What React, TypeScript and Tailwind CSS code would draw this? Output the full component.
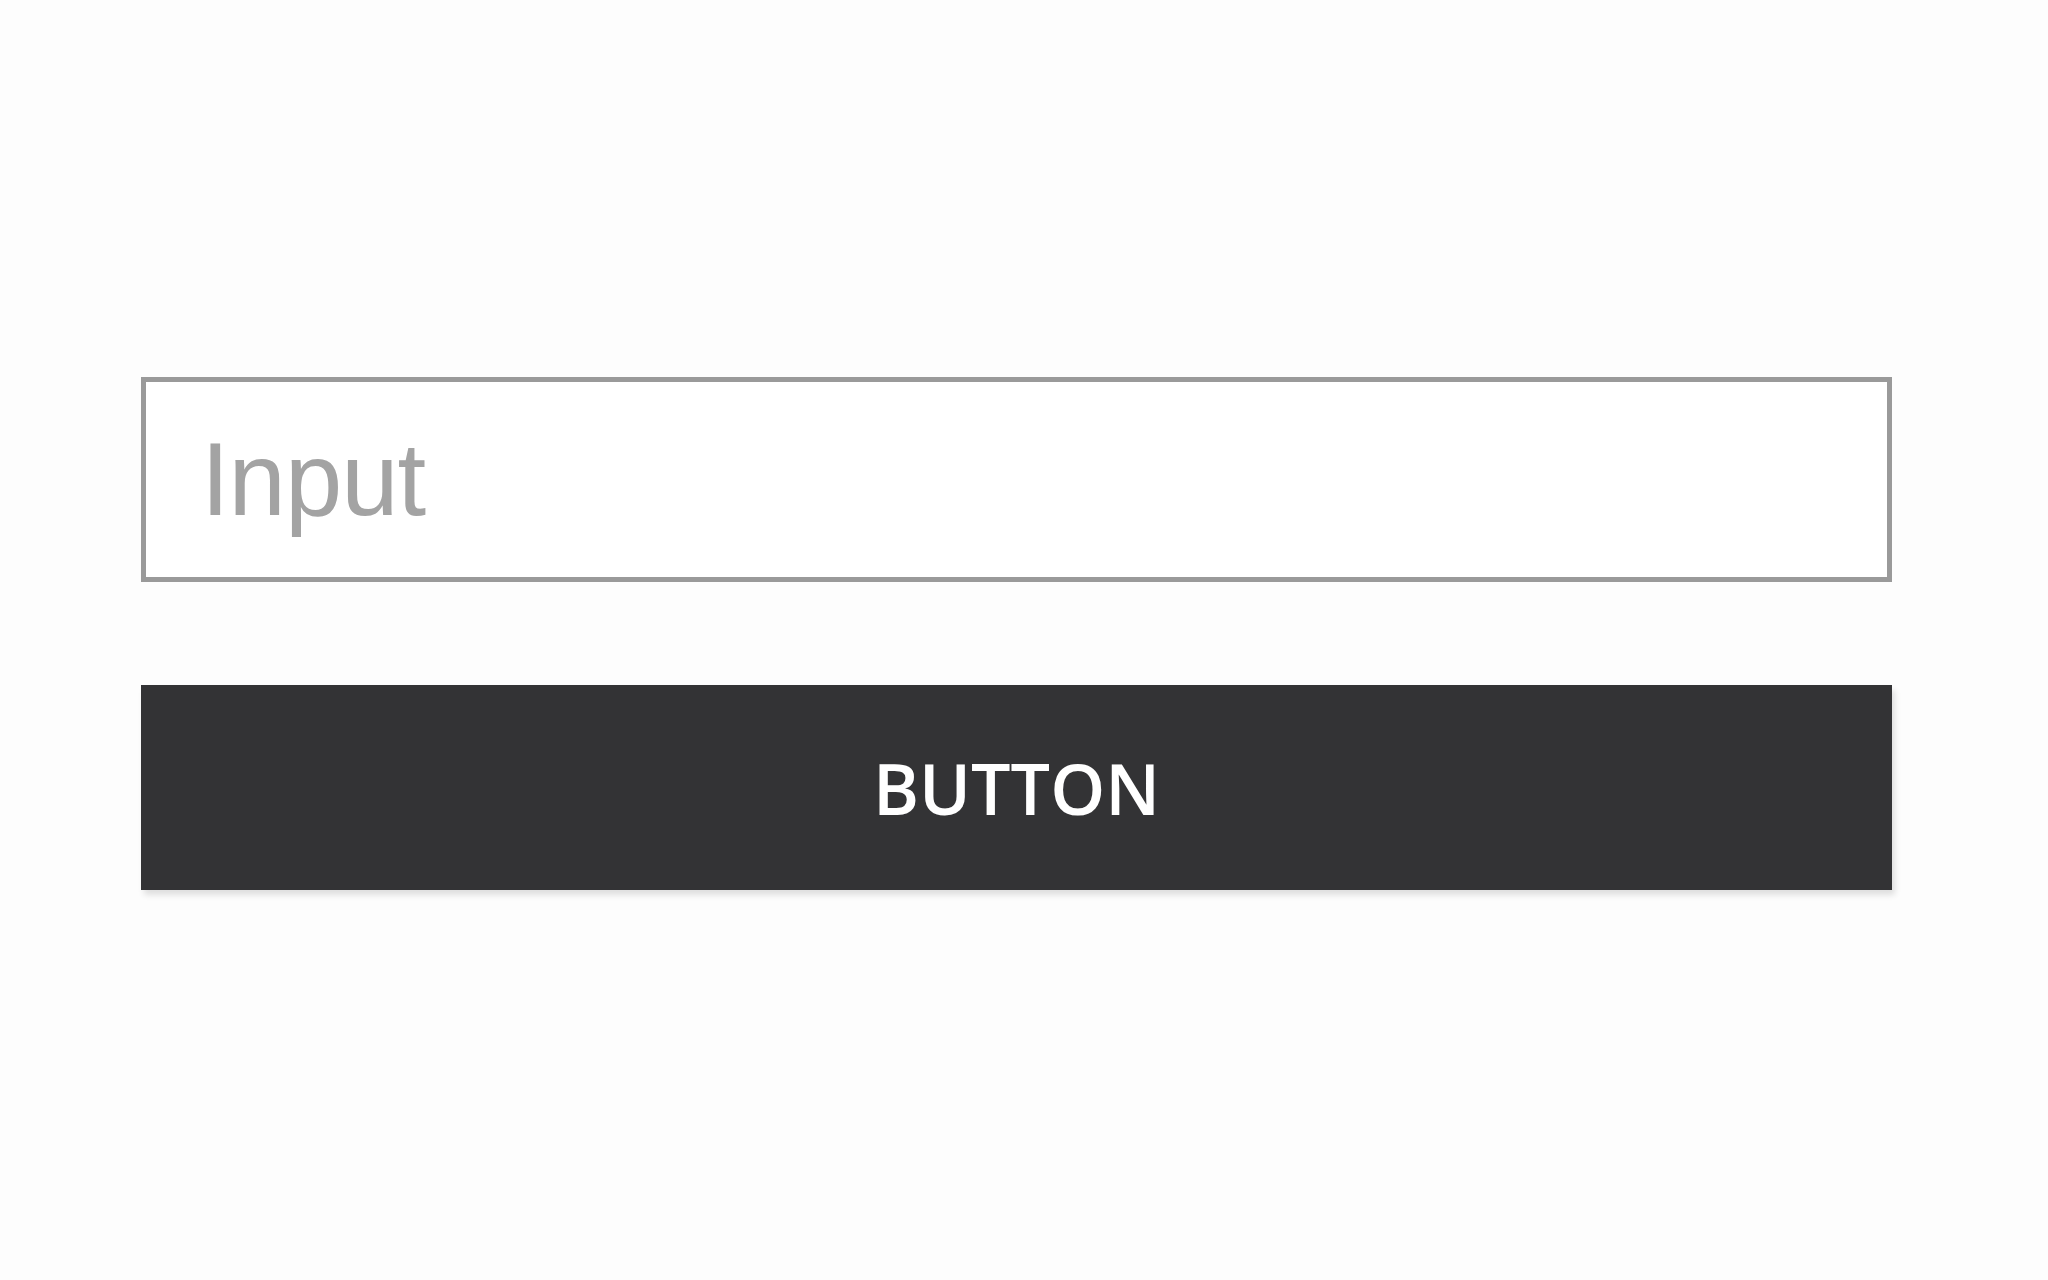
export default function App() {
  return (
    <div className="min-h-screen w-full bg-[#fdfdfd]">
      <div className="flex w-[1751px] flex-col gap-[103px] pt-[377px] ml-[141px]">
        <div className="flex h-[205px] items-center border-[5px] border-[#9a9a9a] bg-white pl-[55px]">
          <input
            placeholder="Input"
            className="w-full bg-transparent font-['Liberation_Sans',Arial,sans-serif] text-[103px] leading-none tracking-[-1px] text-[#a3a3a3] outline-none placeholder:text-[#a3a3a3]"
          />
        </div>
        <button className="flex h-[205px] items-center justify-center bg-[#333335] font-['Open_Sans','DejaVu_Sans',sans-serif] text-[70px] font-semibold leading-none text-white shadow-[3px_5px_6px_rgba(0,0,0,0.12)]">
          BUTTON
        </button>
      </div>
    </div>
  )
}
